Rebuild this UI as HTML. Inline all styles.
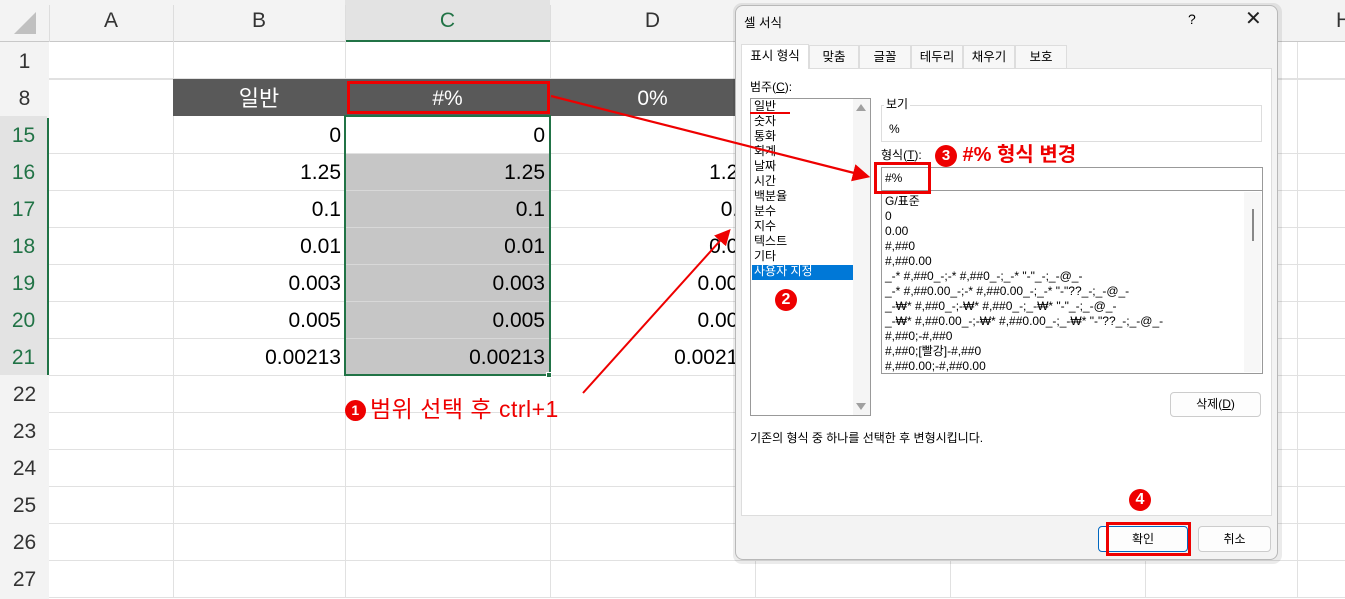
<!DOCTYPE html>
<html><head><meta charset="utf-8">
<style>
*{margin:0;padding:0;box-sizing:border-box}
body{width:1345px;height:598px;overflow:hidden;background:#fff;position:relative;font-family:"Liberation Sans","Noto Sans CJK KR",sans-serif}
.a{position:absolute}
.cell{position:absolute;font-size:21px;color:#000;text-align:right;line-height:39px}
.rh{position:absolute;left:0;width:49px;text-align:center;font-size:21px;color:#333;line-height:39px;background:#f3f3f3}
.hl{position:absolute;height:1px;background:#e1e1e1;left:49px;right:0}
.vl{position:absolute;width:1px;background:#e1e1e1;top:42px;bottom:0}
.dl{font-size:12px;line-height:15px;color:#000}
.tab{position:absolute;top:45px;height:23px;border:1px solid #ddd;border-bottom:none;font-size:12.5px;text-align:center;line-height:23px;background:#f7f7f7}
.circ{display:inline-block;width:22px;height:22px;border-radius:50%;background:#e00;color:#fff;font-weight:bold;font-size:16px;text-align:center;line-height:22px;vertical-align:middle}
</style></head><body>
<div class="a" style="left:0;top:0;width:1345px;height:42px;background:#f3f3f3;border-bottom:1px solid #c8c8c8"></div>
<div class="a" style="left:345px;top:0;width:205px;height:42px;background:#e3e3e3;border-bottom:2px solid #217346"></div>
<div class="a" style="left:14px;top:12px;width:0;height:0;border-left:22px solid transparent;border-bottom:22px solid #c0c0c0"></div>
<div class="a" style="left:49px;top:9px;width:124px;text-align:center;font-size:21px;color:#333">A</div>
<div class="a" style="left:173px;top:9px;width:172px;text-align:center;font-size:21px;color:#333">B</div>
<div class="a" style="left:345px;top:9px;width:205px;text-align:center;font-size:21px;color:#217346">C</div>
<div class="a" style="left:550px;top:9px;width:205px;text-align:center;font-size:21px;color:#333">D</div>
<div class="a" style="left:1336px;top:9px;font-size:21px;color:#333">H</div>
<div class="a" style="left:173px;top:5px;width:1px;height:37px;background:#ddd"></div>
<div class="a" style="left:345px;top:5px;width:1px;height:37px;background:#ddd"></div>
<div class="a" style="left:550px;top:5px;width:1px;height:37px;background:#ddd"></div>
<div class="a" style="left:49px;top:5px;width:1px;height:37px;background:#ddd"></div>
<div class="a" style="left:0;top:42px;width:49px;height:556px;background:#f3f3f3;border-right:1px solid #c8c8c8"></div>
<div class="a" style="left:0;top:116px;width:49px;height:259px;background:#e3e3e3;border-right:2px solid #217346"></div>
<div class="rh" style="top:42px">1</div>
<div class="rh" style="top:79px">8</div>
<div class="rh" style="top:116px;background:#e3e3e3;color:#217346;width:47px">15</div>
<div class="rh" style="top:153px;background:#e3e3e3;color:#217346;width:47px">16</div>
<div class="rh" style="top:190px;background:#e3e3e3;color:#217346;width:47px">17</div>
<div class="rh" style="top:227px;background:#e3e3e3;color:#217346;width:47px">18</div>
<div class="rh" style="top:264px;background:#e3e3e3;color:#217346;width:47px">19</div>
<div class="rh" style="top:301px;background:#e3e3e3;color:#217346;width:47px">20</div>
<div class="rh" style="top:338px;background:#e3e3e3;color:#217346;width:47px;height:37px">21</div>
<div class="rh" style="top:375px">22</div>
<div class="rh" style="top:412px">23</div>
<div class="rh" style="top:449px">24</div>
<div class="rh" style="top:486px">25</div>
<div class="rh" style="top:523px">26</div>
<div class="rh" style="top:560px">27</div>
<div class="hl" style="top:78px;height:2px"></div>
<div class="hl" style="top:153px"></div><div class="hl" style="top:190px"></div><div class="hl" style="top:227px"></div>
<div class="hl" style="top:264px"></div><div class="hl" style="top:301px"></div><div class="hl" style="top:338px"></div>
<div class="hl" style="top:375px"></div><div class="hl" style="top:412px"></div><div class="hl" style="top:449px"></div>
<div class="hl" style="top:486px"></div><div class="hl" style="top:523px"></div><div class="hl" style="top:560px"></div>
<div class="hl" style="top:597px"></div>
<div class="vl" style="left:173px"></div><div class="vl" style="left:345px"></div><div class="vl" style="left:550px"></div>
<div class="vl" style="left:755px"></div><div class="vl" style="left:950px"></div><div class="vl" style="left:1145px"></div><div class="vl" style="left:1297px"></div>
<div class="a" style="left:173px;top:79px;width:570px;height:37px;background:#595959"></div>
<div class="a" style="left:173px;top:80px;width:172px;text-align:center;line-height:37px;color:#fff;font-size:22px">일반</div>
<div class="a" style="left:345px;top:80px;width:205px;text-align:center;line-height:37px;color:#fff;font-size:21px">#%</div>
<div class="a" style="left:550px;top:80px;width:205px;text-align:center;line-height:37px;color:#fff;font-size:21px">0%</div>
<div class="a" style="left:347px;top:81px;width:203px;height:33px;border:3px solid #e00"></div>
<div class="a" style="left:346px;top:154px;width:203px;height:221px;background:#c6c6c6"></div>
<div class="hl" style="left:346px;right:auto;width:203px;top:190px;background:#d8d8d8"></div>
<div class="hl" style="left:346px;right:auto;width:203px;top:227px;background:#d8d8d8"></div>
<div class="hl" style="left:346px;right:auto;width:203px;top:264px;background:#d8d8d8"></div>
<div class="hl" style="left:346px;right:auto;width:203px;top:301px;background:#d8d8d8"></div>
<div class="hl" style="left:346px;right:auto;width:203px;top:338px;background:#d8d8d8"></div>
<div class="a" style="left:344px;top:115px;width:207px;height:261px;border:2px solid #217346"></div>
<div class="a" style="left:546px;top:372px;width:6px;height:6px;background:#217346;border:1px solid #fff"></div>
<div class="cell" style="left:173px;width:168px;top:116px">0</div>
<div class="cell" style="left:173px;width:168px;top:153px">1.25</div>
<div class="cell" style="left:173px;width:168px;top:190px">0.1</div>
<div class="cell" style="left:173px;width:168px;top:227px">0.01</div>
<div class="cell" style="left:173px;width:168px;top:264px">0.003</div>
<div class="cell" style="left:173px;width:168px;top:301px">0.005</div>
<div class="cell" style="left:173px;width:168px;top:338px">0.00213</div>
<div class="cell" style="left:345px;width:200px;top:116px">0</div>
<div class="cell" style="left:345px;width:200px;top:153px">1.25</div>
<div class="cell" style="left:345px;width:200px;top:190px">0.1</div>
<div class="cell" style="left:345px;width:200px;top:227px">0.01</div>
<div class="cell" style="left:345px;width:200px;top:264px">0.003</div>
<div class="cell" style="left:345px;width:200px;top:301px">0.005</div>
<div class="cell" style="left:345px;width:200px;top:338px">0.00213</div>
<div class="a" style="left:550px;top:116px;width:185px;height:260px;overflow:hidden">
<div class="cell" style="left:0;width:200px;top:37px">1.25</div>
<div class="cell" style="left:0;width:200px;top:74px">0.1</div>
<div class="cell" style="left:0;width:200px;top:111px">0.01</div>
<div class="cell" style="left:0;width:200px;top:148px">0.003</div>
<div class="cell" style="left:0;width:200px;top:185px">0.005</div>
<div class="cell" style="left:0;width:200px;top:222px">0.00213</div>
</div>
<div class="a" style="left:345px;top:390px;color:#e00;font-size:23px;white-space:nowrap;letter-spacing:0.5px"><span class="circ" style="width:21px;height:21px;line-height:21px;font-size:14px;margin-right:4px;vertical-align:2px">1</span>범위 선택 후 ctrl+1</div>

<div class="a" style="left:733px;top:3px;width:549px;height:561px;border-radius:9px;background:rgba(0,0,0,0.08)"></div>
<div class="a" style="left:735px;top:5px;width:543px;height:555px;background:#f3f3f3;border:1px solid #b8b8b8;border-radius:8px"></div>
<div class="a" style="left:744px;top:12px;font-size:12.5px">셀 서식</div>
<div class="a" style="left:1188px;top:11px;font-size:14px">?</div>
<div class="a" style="left:1245px;top:6px;font-size:20px;font-weight:300;color:#222">✕</div>
<div class="a" style="left:741px;top:68px;width:531px;height:448px;background:#fff;border:1px solid #ddd"></div>
<div class="tab" style="left:741px;top:44px;width:68px;height:25px;background:#fff">표시 형식</div>
<div class="tab" style="left:809px;width:50px">맞춤</div>
<div class="tab" style="left:859px;width:52px">글꼴</div>
<div class="tab" style="left:911px;width:52px">테두리</div>
<div class="tab" style="left:963px;width:52px">채우기</div>
<div class="tab" style="left:1015px;width:52px">보호</div>
<div class="a dl" style="left:750px;top:80px">범주(<u>C</u>):</div>
<div class="a" style="left:750px;top:98px;width:121px;height:318px;border:1px solid #999;background:#fff"></div>
<div class="a" style="left:853px;top:99px;width:17px;height:316px;background:#f5f5f5"></div>
<div class="a" style="left:856px;top:104px;border-left:5px solid transparent;border-right:5px solid transparent;border-bottom:7px solid #a0a0a0"></div>
<div class="a" style="left:856px;top:403px;border-left:5px solid transparent;border-right:5px solid transparent;border-top:7px solid #a0a0a0"></div>
<div class="a" style="left:752px;top:265px;width:101px;height:15px;background:#0078d7"></div>
<div class="a dl" style="left:754px;top:99px">일반<br>숫자<br>통화<br>회계<br>날짜<br>시간<br>백분율<br>분수<br>지수<br>텍스트<br>기타<br><span style="color:#fff">사용자 지정</span></div>
<div class="a" style="left:750px;top:112px;width:40px;height:2px;background:#e00"></div>
<div class="a" style="left:775px;top:289px"><span class="circ">2</span></div>
<div class="a" style="left:881px;top:105px;width:381px;height:37px;border:1px solid #ddd"></div>
<div class="a dl" style="left:884px;top:97px;background:#fff;padding:0 2px">보기</div>
<div class="a dl" style="left:889px;top:122px">%</div>
<div class="a dl" style="left:881px;top:148px">형식(<u>T</u>):</div>
<div class="a" style="left:935px;top:138px;color:#e00;font-size:20px;font-weight:bold;white-space:nowrap"><span class="circ" style="font-size:15px">3</span> #% 형식 변경</div>
<div class="a" style="left:881px;top:167px;width:382px;height:24px;border:1px solid #999;background:#fff"></div>
<div class="a dl" style="left:885px;top:171px">#%</div>
<div class="a" style="left:881px;top:190px;width:382px;height:184px;border:1px solid #999;background:#fff"></div>
<div class="a" style="left:1244px;top:192px;width:17px;height:180px;background:#f7f7f7"></div>
<div class="a" style="left:1252px;top:209px;width:2px;height:32px;background:#888"></div>
<div class="a dl" style="left:885px;top:194px;white-space:pre">G/표준
0
0.00
#,##0
#,##0.00
_-* #,##0_-;-* #,##0_-;_-* "-"_-;_-@_-
_-* #,##0.00_-;-* #,##0.00_-;_-* "-"??_-;_-@_-
_-₩* #,##0_-;-₩* #,##0_-;_-₩* "-"_-;_-@_-
_-₩* #,##0.00_-;-₩* #,##0.00_-;_-₩* "-"??_-;_-@_-
#,##0;-#,##0
#,##0;[빨강]-#,##0
#,##0.00;-#,##0.00</div>
<div class="a" style="left:874px;top:162px;width:57px;height:32px;border:3px solid #e00"></div>
<div class="a dl" style="left:1170px;top:392px;width:91px;height:25px;border:1px solid #ccc;border-radius:4px;background:#fdfdfd;text-align:center;line-height:23px">삭제(<u>D</u>)</div>
<div class="a dl" style="left:750px;top:431px">기존의 형식 중 하나를 선택한 후 변형시킵니다.</div>
<div class="a" style="left:1129px;top:489px"><span class="circ">4</span></div>
<div class="a dl" style="left:1098px;top:526px;width:90px;height:26px;border:1px solid #0067c0;border-radius:4px;background:#fdfdfd;text-align:center;line-height:24px">확인</div>
<div class="a" style="left:1106px;top:522px;width:85px;height:34px;border:3px solid #e00"></div>
<div class="a dl" style="left:1198px;top:526px;width:73px;height:26px;border:1px solid #ccc;border-radius:4px;background:#fdfdfd;text-align:center;line-height:24px">취소</div>
<svg class="a" style="left:0;top:0" width="1345" height="598">
<defs><marker id="m" markerWidth="8" markerHeight="8" refX="6" refY="4" orient="auto" markerUnits="strokeWidth"><path d="M0,0 L8,4 L0,8 z" fill="#e00"/></marker></defs>
<line x1="551" y1="96" x2="866" y2="176" stroke="#e00" stroke-width="2.2" marker-end="url(#m)"/>
<line x1="583" y1="393" x2="728" y2="232" stroke="#e00" stroke-width="2" marker-end="url(#m)"/>
</svg>
</body></html>
